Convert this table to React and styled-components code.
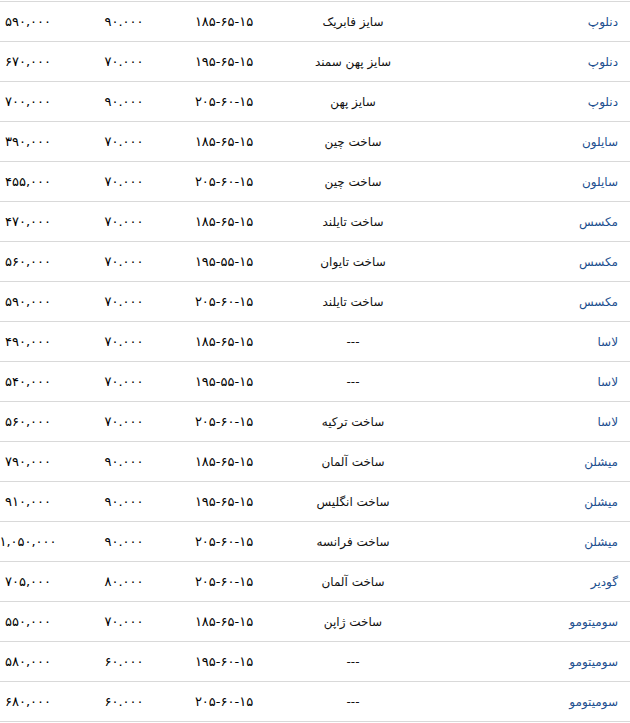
import styled, { createGlobalStyle } from 'styled-components';

const GlobalStyle = createGlobalStyle`
	html, body {
		margin: 0;
		padding: 0;
		background: #fff;
	}
	body {
		font-family: 'DejaVu Sans', 'Noto Sans', sans-serif;
	}
`;

const TIRES = [
	['دنلوپ', 'سایز فابریک', '۱۸۵-۶۵-۱۵', '۹۰.۰۰۰', '۵۹۰,۰۰۰'],
	['دنلوپ', 'سایز پهن سمند', '۱۹۵-۶۵-۱۵', '۷۰.۰۰۰', '۶۷۰,۰۰۰'],
	['دنلوپ', 'سایز پهن', '۲۰۵-۶۰-۱۵', '۹۰.۰۰۰', '۷۰۰,۰۰۰'],
	['سایلون', 'ساخت چین', '۱۸۵-۶۵-۱۵', '۷۰.۰۰۰', '۳۹۰,۰۰۰'],
	['سایلون', 'ساخت چین', '۲۰۵-۶۰-۱۵', '۷۰.۰۰۰', '۴۵۵,۰۰۰'],
	['مکسس', 'ساخت تایلند', '۱۸۵-۶۵-۱۵', '۷۰.۰۰۰', '۴۷۰,۰۰۰'],
	['مکسس', 'ساخت تایوان', '۱۹۵-۵۵-۱۵', '۷۰.۰۰۰', '۵۶۰,۰۰۰'],
	['مکسس', 'ساخت تایلند', '۲۰۵-۶۰-۱۵', '۷۰.۰۰۰', '۵۹۰,۰۰۰'],
	['لاسا', '---', '۱۸۵-۶۵-۱۵', '۷۰.۰۰۰', '۴۹۰,۰۰۰'],
	['لاسا', '---', '۱۹۵-۵۵-۱۵', '۷۰.۰۰۰', '۵۴۰,۰۰۰'],
	['لاسا', 'ساخت ترکیه', '۲۰۵-۶۰-۱۵', '۷۰.۰۰۰', '۵۶۰,۰۰۰'],
	['میشلن', 'ساخت آلمان', '۱۸۵-۶۵-۱۵', '۹۰.۰۰۰', '۷۹۰,۰۰۰'],
	['میشلن', 'ساخت انگلیس', '۱۹۵-۶۵-۱۵', '۹۰.۰۰۰', '۹۱۰,۰۰۰'],
	['میشلن', 'ساخت فرانسه', '۲۰۵-۶۰-۱۵', '۹۰.۰۰۰', '۱,۰۵۰,۰۰۰'],
	['گودیر', 'ساخت آلمان', '۲۰۵-۶۰-۱۵', '۸۰.۰۰۰', '۷۰۵,۰۰۰'],
	['سومیتومو', 'ساخت ژاپن', '۱۸۵-۶۵-۱۵', '۷۰.۰۰۰', '۵۵۰,۰۰۰'],
	['سومیتومو', '---', '۱۹۵-۶۰-۱۵', '۶۰.۰۰۰', '۵۸۰,۰۰۰'],
	['سومیتومو', '---', '۲۰۵-۶۰-۱۵', '۶۰.۰۰۰', '۶۸۰,۰۰۰'],
];

const Table = styled.div`
	direction: rtl;
	width: 630px;
	padding-top: 1px;
	border-bottom: 1px solid #d9d9d9;
`;

const Row = styled.div`
	display: grid;
	grid-template-columns: 180px 194px 64px 136px 56px;
	align-items: center;
	height: 39px;
	border-top: 1px solid #d9d9d9;
	font-size: 12px;
	color: #111;
`;

const Brand = styled.a`
	justify-self: start;
	padding-right: 12px;
	color: #1d4f8f;
	text-decoration: none;
`;

const Cell = styled.span`
	justify-self: center;
	white-space: nowrap;
	color: ${props => (props.$num ? '#000' : '#111')};
	font-size: ${props => (props.$num ? '13px' : '12px')};
`;

const App = () => {
	return (
		<>
			<GlobalStyle />
			<Table>
				{TIRES.map((tire, i) => (
					<Row key={i}>
						<Brand href="#">{tire[0]}</Brand>
						<Cell>{tire[1]}</Cell>
						<Cell $num>{tire[2]}</Cell>
						<Cell $num>{tire[3]}</Cell>
						<Cell $num>{tire[4]}</Cell>
					</Row>
				))}
			</Table>
		</>
	);
};

export default App;
